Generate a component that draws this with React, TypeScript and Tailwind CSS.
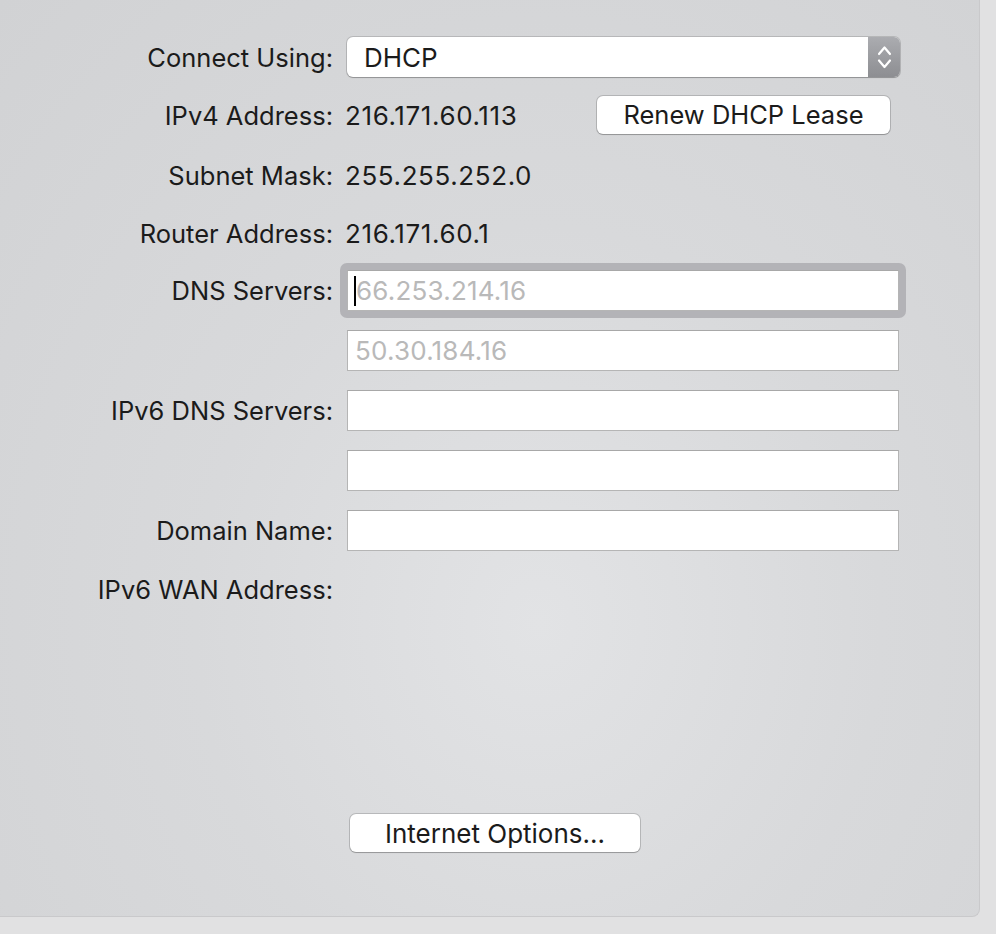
import React from 'react'

const FONT = { fontFamily: 'Inter, "Liberation Sans", sans-serif' }

function Label({ children }: { children?: React.ReactNode }) {
  return (
    <div className="w-[333px] shrink-0 pt-[1px] text-right text-[25.5px] text-[#1b1b1b] leading-none">
      {children}
    </div>
  )
}

function Field({ value, focused }: { value?: string; focused?: boolean }) {
  return (
    <div
      className={
        focused
          ? 'relative -m-[7px] rounded-[7px] bg-[#b3b3b7] p-[7px]'
          : 'relative'
      }
    >
      <div className="flex h-[41px] w-[552px] items-center border border-[#b5b5b5] border-t-[#a8a8a8] bg-white pl-[7px] pt-[1px] text-[26px] tracking-[0.2px] text-[#b9b9b9]">
        {focused && <span className="-ml-[1px] h-[30px] w-[2px] bg-black" />}
        {value}
      </div>
    </div>
  )
}

function Row({ children, className }: { children: React.ReactNode; className?: string }) {
  return <div className={'flex h-[40px] items-center gap-[14px] ' + (className || '')}>{children}</div>
}

function MacButton({ children, className }: { children: React.ReactNode; className?: string }) {
  return (
    <button
      className={
        'flex h-[38px] items-center justify-center rounded-[6px] bg-white text-[25.5px] text-[#1b1b1b] shadow-[0_0_0_1px_rgba(0,0,0,0.16),0_1px_1px_rgba(0,0,0,0.18)] ' +
        (className || '')
      }
    >
      {children}
    </button>
  )
}

export default function App() {
  return (
    <div className="h-[934px] w-[996px] bg-[#e1e1e2]" style={FONT}>
      <div className="flex h-[917px] w-[980px] flex-col rounded-br-[8px] border-r border-b border-[#c9c9cb] bg-[radial-gradient(ellipse_at_55%_68%,#e2e3e5_0%,#d8d9db_45%,#d1d2d4_100%)] pt-[37px]">
        <Row>
          <Label>Connect Using:</Label>
          <div className="flex h-[40px] w-[553px] overflow-hidden rounded-[6px] bg-white shadow-[0_0_0_1px_rgba(0,0,0,0.14),0_1px_1px_rgba(0,0,0,0.2)]">
            <div className="flex flex-1 items-center pl-[17px] pt-[1px] text-[26px] text-[#1b1b1b]">DHCP</div>
            <div className="flex w-[32px] items-center justify-center bg-gradient-to-b from-[#abacb0] to-[#8d8e92]">
              <svg width="17" height="28" viewBox="0 0 17 28" fill="none" stroke="white" strokeWidth="2.2" strokeLinecap="round" strokeLinejoin="round">
                <path d="M3 11 L8.5 4.5 L14 11" />
                <path d="M3 17.5 L8.5 24 L14 17.5" />
              </svg>
            </div>
          </div>
        </Row>
        <Row className="mt-[18px]">
          <Label>IPv4 Address:</Label>
          <div className="flex w-[543px] items-center text-[26px] text-[#1b1b1b]">
            <span className="-ml-[2px] flex-1 pt-[1px] tracking-[0.6px]">216.171.60.113</span>
            <MacButton className="w-[293px]">Renew DHCP Lease</MacButton>
          </div>
        </Row>
        <Row className="mt-[20px]">
          <Label>Subnet Mask:</Label>
          <span className="-ml-[2px] pt-[1px] text-[26px] tracking-[0.6px] text-[#1b1b1b]">255.255.252.0</span>
        </Row>
        <Row className="mt-[18px]">
          <Label>Router Address:</Label>
          <span className="-ml-[2px] pt-[1px] text-[26px] tracking-[0.6px] text-[#1b1b1b]">216.171.60.1</span>
        </Row>
        <Row className="mt-[17px]">
          <Label>DNS Servers:</Label>
          <Field value="66.253.214.16" focused />
        </Row>
        <Row className="mt-[20px]">
          <Label />
          <Field value="50.30.184.16" />
        </Row>
        <Row className="mt-[20px]">
          <Label>IPv6 DNS Servers:</Label>
          <Field />
        </Row>
        <Row className="mt-[20px]">
          <Label />
          <Field />
        </Row>
        <Row className="mt-[20px]">
          <Label>Domain Name:</Label>
          <Field />
        </Row>
        <Row className="mt-[19px]">
          <Label>IPv6 WAN Address:</Label>
        </Row>
        <div className="mt-[205px] pl-[350px]">
          <MacButton className="w-[290px] text-[26px]">Internet Options...</MacButton>
        </div>
      </div>
    </div>
  )
}
